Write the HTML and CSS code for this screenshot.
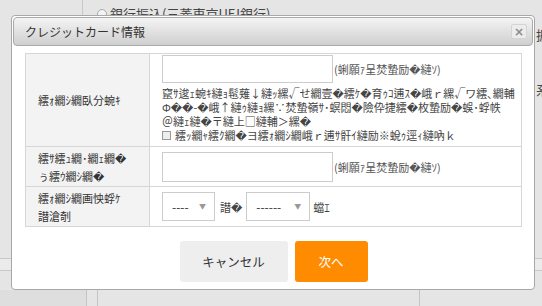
FILE: index.html
```html
<!DOCTYPE html>
<html lang="ja">

<head>
  <meta charset="UTF-8" />
  <meta name="viewport" content="width=device-width, initial-scale=1.0" />
  <title>クレジットカード情報</title>
  <link rel="stylesheet" href="styles.css">
</head>

<body>
  <div class="page">
    <div class="page-top">
      <div class="page-side"></div>
      <div class="page-main">
        <label class="pay-option"><span class="radio"></span>銀行振込(三菱東京UFJ銀行)</label>
      </div>
      <div class="page-edge">
        <span>振</span>
        <span class="edge-low">系</span>
      </div>
    </div>
    <div class="page-band"></div>
    <div class="page-gap"></div>
    <div class="page-foot">
      <div class="foot-a"></div>
      <div class="foot-b"></div>
      <div class="foot-c"></div>
      <div class="foot-d"></div>
    </div>
  </div>

  <div class="dialog">
    <div class="dialog-title">
      <span>クレジットカード情報</span>
      <button class="dialog-close">×</button>
    </div>

    <div class="dialog-body">
      <table class="card-table">
        <tr class="row-number">
          <th>繧ｫ繝ｼ繝臥分蜿ｷ</th>
          <td>
            <div class="field">
              <input type="text" class="text-input" />
              <span class="hint">(蜊願ｧ呈焚蟄励�縺ｿ)</span>
            </div>
            <p class="note">
              竄ｻ逡ｪ蜿ｷ縺ｮ髢薙↓縺ｯ縲√せ繝壹�繧ｹ�育ｩｺ逋ｽ�峨ｒ縲√ワ繧､繝輔<br>
              Φ��-�峨↑縺ｩ縺ｮ縲∵焚蟄嶺ｻ･螟悶�險伜捷繧�枚蟄励�蜈･蜉帙<br>
              ＠縺ｪ縺�〒縺上□縺輔＞縲�
            </p>
            <label class="save"><input type="checkbox" class="check" />繧ｯ繝ｬ繧ｸ繝�ヨ繧ｫ繝ｼ繝峨ｒ逋ｻ骭ｲ縺励※蛻ｩ逕ｨ縺吶ｋ</label>
          </td>
        </tr>
        <tr class="row-code">
          <th>繧ｻ繧ｭ繝･繝ｪ繝�<br>ぅ繧ｳ繝ｼ繝�</th>
          <td>
            <div class="field">
              <input type="text" class="text-input tall" />
              <span class="hint">(蜊願ｧ呈焚蟄励�縺ｿ)</span>
            </div>
          </td>
        </tr>
        <tr class="row-expiry">
          <th>繧ｫ繝ｼ繝画怏蜉ｹ<br>譛滄剞</th>
          <td>
            <div class="field">
              <span class="select-wrap">
                <select class="month">
                  <option>----</option>
                </select>
              </span>
              <span class="unit">譛�</span>
              <span class="select-wrap">
                <select class="year">
                  <option>------</option>
                </select>
              </span>
              <span class="unit unit-year">蟷ｴ</span>
            </div>
          </td>
        </tr>
      </table>

      <div class="actions">
        <button class="btn btn-cancel">キャンセル</button>
        <button class="btn btn-next">次へ</button>
      </div>
    </div>
  </div>
</body>

</html>
```

FILE: styles.css
```css
body {
  margin: 0;
  width: 542px;
  height: 306px;
  overflow: hidden;
  position: relative;
  background: #e5e5e5;
  color: #333;
  font-family: "Noto Sans CJK JP", "DejaVu Sans", sans-serif;
}

/* page behind the dialog */
.page {
  height: 306px;
  display: flex;
  flex-direction: column;
}

.page-top {
  height: 258px;
  display: flex;
}

.page-side {
  width: 82px;
  border-right: 1px solid #c8c8c8;
}

.page-main {
  flex: 1;
  padding: 4px 0 0 14px;
  font-size: 13px;
  color: #444;
}

.pay-option {
  display: flex;
  align-items: center;
  gap: 3px;
}

.radio {
  width: 8px;
  height: 8px;
  border: 1px solid #aaa;
  border-radius: 50%;
  background: #f4f4f4;
}

.page-edge {
  width: 6px;
  overflow: hidden;
  padding-top: 25px;
  font-size: 13px;
  color: #444;
  display: flex;
  flex-direction: column;
}

.edge-low {
  margin-top: 36px;
}

.page-band {
  height: 11px;
  border-top: 1px solid #c8c8c8;
  border-bottom: 1px solid #c8c8c8;
  background: #ebebeb;
}

.page-gap {
  height: 19px;
}

.page-foot {
  flex: 1;
  display: flex;
}

.foot-a {
  width: 86px;
  background: #dedede;
  border-right: 1px solid #c4c4c4;
}

.foot-b {
  width: 10px;
  border-right: 1px solid #c4c4c4;
}

.foot-c {
  width: 321px;
  border-right: 1px solid #c4c4c4;
}

.foot-d {
  flex: 1;
}

/* dialog */
.dialog {
  position: absolute;
  left: 11px;
  top: 15px;
  width: 524px;
  height: 275px;
  box-sizing: border-box;
  padding: 1px;
  border: 1px solid #a8a8a8;
  border-radius: 4px;
  background: #fff;
}

.dialog-title {
  height: 29px;
  box-sizing: border-box;
  border: 1px solid #aaa;
  border-radius: 4px;
  background: linear-gradient(#f4f4f4, #cfcfcf);
  display: flex;
  align-items: center;
  justify-content: space-between;
  padding: 0 5px 0 11px;
  font-size: 12px;
  color: #333;
}

.dialog-close {
  width: 16px;
  height: 15px;
  padding: 0;
  border: 1px solid #d4d4d4;
  border-radius: 2px;
  background: #ececec;
  color: #8a8a8a;
  font-size: 12px;
  font-weight: bold;
  line-height: 12px;
  font-family: "DejaVu Sans", sans-serif;
}

.dialog-body {
  padding: 7px 11px 0 12px;
}

.card-table {
  width: 497px;
  border-collapse: collapse;
  font-size: 11px;
}

.card-table th,
.card-table td {
  border: 1px solid #d6d6d6;
}

.card-table th {
  width: 111px;
  padding: 0 0 0 12px;
  background: #f3f3f3;
  font-weight: normal;
  text-align: left;
  line-height: 18px;
}

.card-table td {
  padding: 5px 0 4px 12px;
}

.row-number td {
  padding-top: 1px;
  padding-bottom: 4px;
}

.row-expiry td {
  padding-bottom: 5px;
}

.field {
  display: flex;
  align-items: center;
}

.text-input {
  width: 171px;
  height: 28px;
  box-sizing: border-box;
  margin: 0;
  border: 1px solid #ccc;
  background: #fff;
}

.text-input.tall {
  height: 30px;
}

.hint {
  margin-left: 1px;
  color: #555;
}

.note {
  margin: 3px 0 0;
  line-height: 14px;
  color: #444;
}

.save {
  display: flex;
  align-items: center;
  gap: 4px;
  line-height: 14px;
  color: #444;
}

.check {
  appearance: none;
  width: 9px;
  height: 9px;
  margin: 0;
  border: 1px solid #999;
  background: #eee;
}

.select-wrap {
  position: relative;
  display: inline-block;
}

.select-wrap::after {
  content: "▼";
  position: absolute;
  right: 9px;
  top: 9px;
  font-size: 7px;
  color: #999;
  pointer-events: none;
}

select {
  appearance: none;
  height: 29px;
  margin: 0;
  padding: 0 0 0 9px;
  border: 1px solid #ccc;
  border-radius: 0;
  background: #fff;
  font-family: inherit;
  font-size: 12px;
  color: #333;
}

.month {
  width: 53px;
}

.year {
  width: 64px;
}

.unit {
  margin: 0 4px 0 5px;
  color: #444;
}

.unit-year {
  margin-left: 3px;
}

.actions {
  display: flex;
  justify-content: center;
  gap: 7px;
  margin-top: 14px;
}

.btn {
  height: 41px;
  border: none;
  border-radius: 3px;
  font-family: inherit;
  font-size: 12.5px;
}

.btn-cancel {
  width: 108px;
  background: #eeeeee;
  color: #333;
}

.btn-next {
  width: 73px;
  background: #ff8c00;
  color: #fff;
}
```
